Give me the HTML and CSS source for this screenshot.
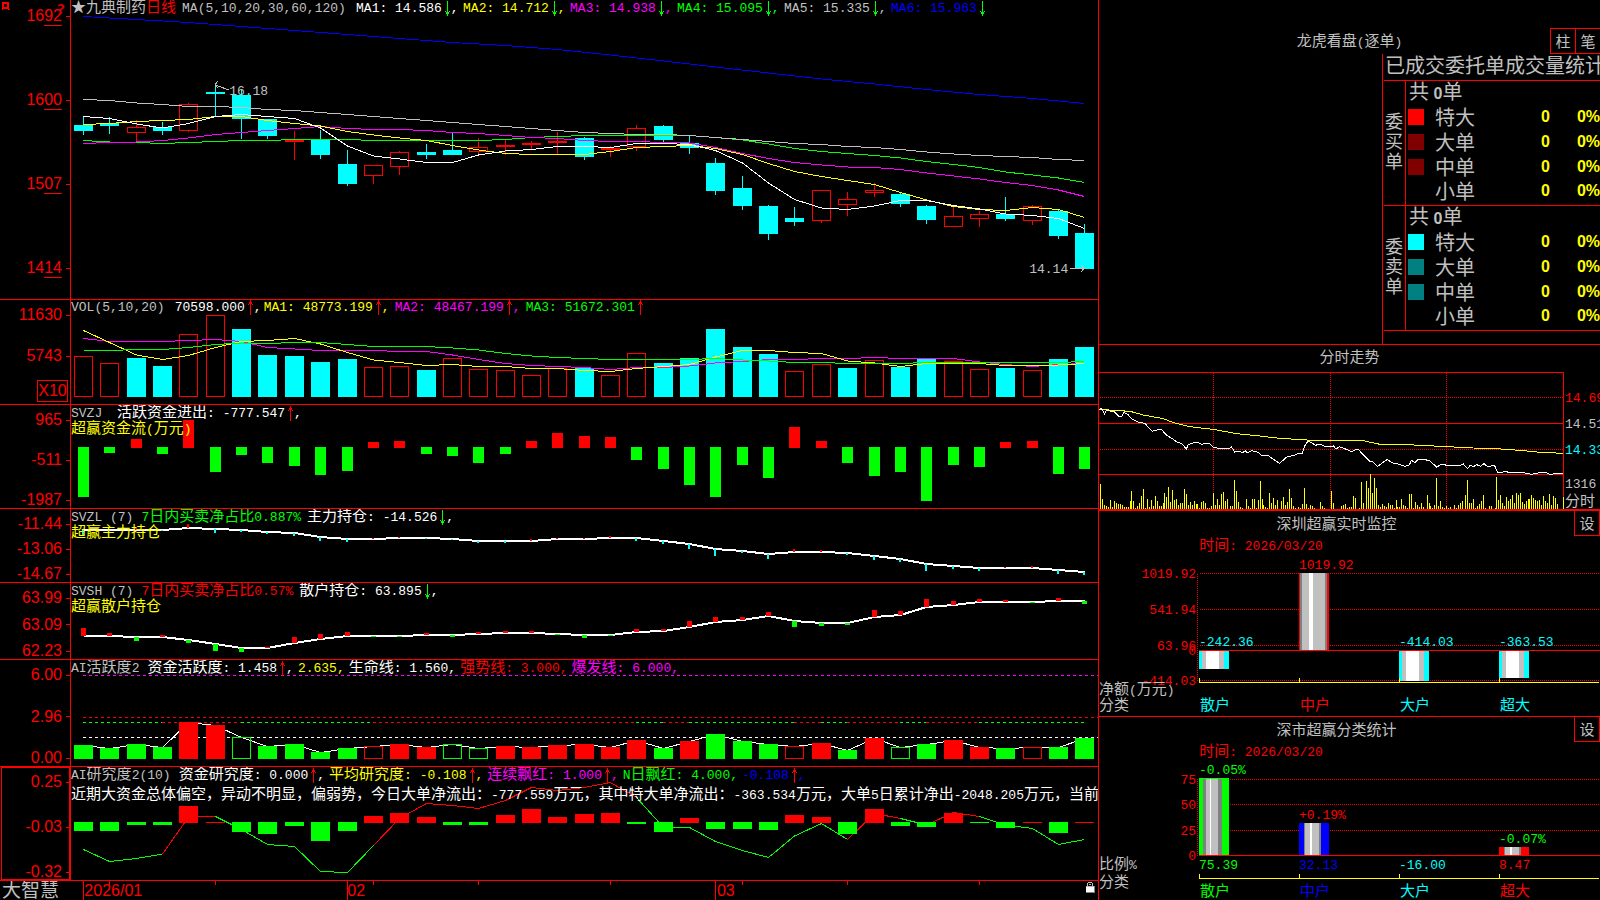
FILE: index.html
```
<!DOCTYPE html>
<html lang="zh-CN">
<head>
<meta charset="utf-8">
<title>九典制药 日线 - 大智慧</title>
<link rel="stylesheet" href="styles.css">
</head>
<body>
<svg class="defs" aria-hidden="true">
  <symbol id="down" viewBox="0 0 6 15"><path d="M2 0h1v15h-1zM1 11h3v2h-3zM0 10h1v1h-1zM4 10h1v1h-1z" fill="#0f0"/></symbol>
  <symbol id="up" viewBox="0 0 6 15"><path d="M2 0h1v15h-1zM1 2h3v2h-3zM0 4h1v1h-1zM4 4h1v1h-1z" fill="#f00"/></symbol>
</svg>
<div class="screen">
  <main class="charts">
    <section class="pane price">
      <ul class="axis">
        <li>16<u>92</u></li><li>16<u>00</u></li><li>15<u>07</u></li><li>14<u>14</u></li>
      </ul>
      <svg class="corner" viewBox="0 0 8 8"><path d="M0 0h7v7h-7zM2 2v3h3v-3zM6 7h2v1h-2zM0 7h1v1h-1z" fill="#f00" fill-rule="evenodd"/></svg>
      <span class="help">?</span>
      <div class="plot">
        <svg id="price" viewBox="71 0 1027 299" preserveAspectRatio="none"></svg>
        <div class="legend">
          <p class="line first"><span class="grey zh">★九典制药<span class="red">日线</span></span><span class="grey ma0">MA(5,10,20,30,60,120)</span><span class="ma white">MA1: 14.586<svg class="arr"><use href="#down"/></svg>,</span><span class="ma yellow">MA2: 14.712<svg class="arr"><use href="#down"/></svg>,</span><span class="ma magenta">MA3: 14.938<svg class="arr"><use href="#down"/></svg>,</span><span class="ma green">MA4: 15.095<svg class="arr"><use href="#down"/></svg>,</span><span class="ma grey">MA5: 15.335<svg class="arr"><use href="#down"/></svg>,</span><span class="ma blue">MA6: 15.963<svg class="arr"><use href="#down"/></svg></span></p>
        </div>
        <span class="note high">16.18</span>
        <span class="note low">14.14</span>
      </div>
    </section>
    <section class="pane vol">
      <ul class="axis"><li>11630</li><li>5743</li><li class="unit"><span>X10</span></li></ul>
      <div class="plot">
        <svg id="volume" viewBox="71 300 1027 104" preserveAspectRatio="none"></svg>
        <div class="legend">
          <p class="line"><span class="grey">VOL(5,10,20)</span><span class="white vnow">70598.000<svg class="arr"><use href="#up"/></svg>,</span><span class="vma yellow">MA1: 48773.199<svg class="arr"><use href="#up"/></svg>,</span><span class="vma magenta">MA2: 48467.199<svg class="arr"><use href="#up"/></svg>,</span><span class="vma green">MA3: 51672.301<svg class="arr"><use href="#up"/></svg></span></p>
        </div>
      </div>
    </section>
    <section class="pane">
      <ul class="axis"><li>965</li><li>-511</li><li>-1987</li></ul>
      <div class="plot">
        <svg id="flow" viewBox="71 405 1027 103" preserveAspectRatio="none"></svg>
        <div class="legend">
          <p class="line"><span class="grey">SVZJ </span><span class="white far"><span class="zh">活跃资金进出</span>: -777.547<svg class="arr"><use href="#up"/></svg>,</span></p>
          <p class="line sub yellow"><span><span class="zh">超赢资金流</span>(<span class="zh">万元</span>)</span></p>
        </div>
      </div>
    </section>
    <section class="pane">
      <ul class="axis"><li>-11.44</li><li>-13.06</li><li>-14.67</li></ul>
      <div class="plot">
        <svg id="main" viewBox="71 509 1027 73" preserveAspectRatio="none"></svg>
        <div class="legend">
          <p class="line"><span class="grey">SVZL (7)</span><span class="green pct">7<span class="zh">日内买卖净占比</span>0.887%</span><span class="white"><span class="zh">主力持仓</span>: -14.526<svg class="arr"><use href="#down"/></svg>,</span></p>
          <p class="line sub yellow"><span class="zh">超赢主力持仓</span></p>
        </div>
      </div>
    </section>
    <section class="pane">
      <ul class="axis"><li>63.99</li><li>63.09</li><li>62.23</li></ul>
      <div class="plot">
        <svg id="retail" viewBox="71 583 1027 76" preserveAspectRatio="none"></svg>
        <div class="legend">
          <p class="line"><span class="grey">SVSH (7)</span><span class="red pct">7<span class="zh">日内买卖净占比</span>0.57%</span><span class="white"><span class="zh">散户持仓</span>: 63.895<svg class="arr"><use href="#down"/></svg>,</span></p>
          <p class="line sub yellow"><span class="zh">超赢散户持仓</span></p>
        </div>
      </div>
    </section>
    <section class="pane">
      <ul class="axis"><li>6.00</li><li>2.96</li><li>0.00</li></ul>
      <div class="plot">
        <svg id="active" viewBox="71 660 1027 106" preserveAspectRatio="none"></svg>
        <div class="legend">
          <p class="line wide"><span class="grey name">AI<span class="zh">活跃度</span>2</span><span class="white"><span class="zh">资金活跃度</span>: 1.458<svg class="arr"><use href="#up"/></svg>,</span><span class="yellow">2.635,</span><span class="white"><span class="zh">生命线</span>: 1.560,</span><span class="red"><span class="zh">强势线</span>: 3.000,</span><span class="magenta"><span class="zh">爆发线</span>: 6.000,</span></p>
        </div>
      </div>
    </section>
    <section class="pane">
      <ul class="axis boxed"><li>0.25</li><li>-0.03</li><li>-0.32</li></ul>
      <div class="plot">
        <svg id="study" viewBox="71 767 1027 113" preserveAspectRatio="none"></svg>
        <div class="legend">
          <p class="line wide"><span class="grey name">AI<span class="zh">研究度</span>2(10)</span><span class="white"><span class="zh">资金研究度</span>: 0.000<svg class="arr"><use href="#up"/></svg>,</span><span class="yellow"><span class="zh">平均研究度</span>: -0.108<svg class="arr"><use href="#up"/></svg>,</span><span class="magenta"><span class="zh">连续飘红</span>: 1.000<svg class="arr"><use href="#up"/></svg>,</span><span class="green">N<span class="zh">日飘红</span>: 4.000,</span><span class="blue">-0.108<svg class="arr"><use href="#up"/></svg>,</span></p>
          <p class="line advice white"><span><span class="zh">近期大资金总体偏空，异动不明显，偏弱势，今日大单净流出：</span>-777.559<span class="zh">万元，其中特大单净流出：</span>-363.534<span class="zh">万元，大单</span>5<span class="zh">日累计净出</span>-2048.205<span class="zh">万元，当前</span></span></p>
        </div>
      </div>
    </section>
    <footer class="dates">
      <span class="brand">大智慧</span>
      <div class="plot">
        <svg id="dates" viewBox="71 881 1027 19" preserveAspectRatio="none"></svg>
        <span class="month m1">2026/01</span><span class="month m2">02</span><span class="month m3">03</span>
        <svg class="lock" viewBox="0 0 11 13"><path d="M3 1h4v1h-4zM2 2h1v3h-1zM7 2h1v3h-1zM4 3h2v1h-2z" fill="#c0c0c0"/><path d="M1 5h8v6h-8z" fill="#fff"/><path d="M9 5h1v7h-9v-1h8z" fill="#808080"/><path d="M1 5h8v1h-8z" fill="#c0c0c0"/></svg>
      </div>
    </footer>
  </main>

  <aside class="side">
    <section class="orders">
      <header class="head">
        <h2 class="grey"><span class="zh">龙虎看盘</span>(<span class="zh">逐单</span>)</h2>
        <div class="tools"><button type="button">柱</button><button type="button">笔</button></div>
      </header>
      <div class="book">
        <h3>已成交委托单成交量统计</h3>
        <table>
          <tbody>
            <tr><th rowspan="5" class="v">委<br>买<br>单</th><td colspan="4" class="sum">共 <b>0</b>单</td></tr>
            <tr><td class="sw"><i class="s1"></i></td><td class="nm">特大</td><td class="n">0</td><td class="p">0%</td></tr>
            <tr><td class="sw"><i class="s2"></i></td><td class="nm">大单</td><td class="n">0</td><td class="p">0%</td></tr>
            <tr><td class="sw"><i class="s2"></i></td><td class="nm">中单</td><td class="n">0</td><td class="p">0%</td></tr>
            <tr><td class="sw"></td><td class="nm">小单</td><td class="n">0</td><td class="p">0%</td></tr>
          </tbody>
          <tbody>
            <tr><th rowspan="5" class="v">委<br>卖<br>单</th><td colspan="4" class="sum">共 <b>0</b>单</td></tr>
            <tr><td class="sw"><i class="s3"></i></td><td class="nm">特大</td><td class="n">0</td><td class="p">0%</td></tr>
            <tr><td class="sw"><i class="s4"></i></td><td class="nm">大单</td><td class="n">0</td><td class="p">0%</td></tr>
            <tr><td class="sw"><i class="s4"></i></td><td class="nm">中单</td><td class="n">0</td><td class="p">0%</td></tr>
            <tr><td class="sw"></td><td class="nm">小单</td><td class="n">0</td><td class="p">0%</td></tr>
          </tbody>
        </table>
      </div>
    </section>
    <section class="minute">
      <h2 class="grey zh">分时走势</h2>
      <svg id="minute" viewBox="1099 372 501 137"></svg>
    </section>
    <section class="monitor">
      <header class="head"><h2 class="grey zh">深圳超赢实时监控</h2><div class="tools"><button type="button">设</button></div></header>
      <p class="when"><span class="zh">时间</span>: 2026/03/20</p>
      <svg id="net" viewBox="1099 553 501 163"></svg>
    </section>
    <section class="stats">
      <header class="head"><h2 class="grey zh">深市超赢分类统计</h2><div class="tools"><button type="button">设</button></div></header>
      <p class="when"><span class="zh">时间</span>: 2026/03/20</p>
      <svg id="share" viewBox="1099 759 501 141"></svg>
    </section>
  </aside>
</div>
<script src="charts.js"></script>
</body>
</html>
```
FILE: styles.css
```
* { box-sizing: border-box; }
html, body { height: 100%; }
body { margin: 0; background: #000; color: #c0c0c0; font: 13px/16px "Liberation Mono", "Noto Sans CJK SC", monospace; overflow: hidden; }
ul, p, h2, h3 { margin: 0; padding: 0; list-style: none; font-weight: normal; font-size: inherit; }
svg { display: block; shape-rendering: crispEdges; }
.defs { position: absolute; width: 0; height: 0; }
.zh { font-family: "Noto Sans CJK SC", sans-serif; font-size: 15px; }
.red { color: #f00; }
.green { color: #0f0; }
.blue { color: #00f; }
.yellow { color: #ff0; }
.magenta { color: #f0f; }
.white { color: #fff; }
.grey { color: #c0c0c0; }

.screen { display: grid; grid-template-columns: minmax(0, 1098fr) minmax(0, 502fr); height: 100vh; }

.charts { display: grid; grid-template-rows: 300fr 105fr 104fr 74fr 77fr 107fr 114fr 19fr; min-height: 0; }
.pane { position: relative; display: grid; grid-template-columns: 71px minmax(0, 1fr); border-bottom: 1px solid #f00; min-height: 0; }
.axis { display: flex; flex-direction: column; justify-content: space-between; padding-top: 7px; border-right: 1px solid #f00; color: #f00; font: 16px/16px "Liberation Sans", sans-serif; }
.axis li { display: flex; justify-content: flex-end; align-items: center; height: 16px; }
.axis li::after { content: ""; width: 4px; height: 1px; margin-left: 4px; background: #f00; }
.axis u { text-decoration: none; border-bottom: 1px solid #f00; height: 18px; }
.price .axis { padding: 8px 0 23px; }
.price .axis li { align-items: flex-start; }
.price .axis li::after { margin-top: 8px; }
.vol .axis { justify-content: flex-start; gap: 25px; }
.vol .unit { height: 22px; margin-top: -9px; }
.vol .unit::after { display: none; }
.unit span { border: 1px solid #f00; line-height: 20px; width: 31px; margin-right: 2px; text-align: center; }
.boxed { position: relative; }
.boxed::before { content: ""; position: absolute; inset: 0 0 0 1px; border: 1px solid #f00; }
.corner { position: absolute; left: 2px; top: 2px; width: 8px; height: 8px; }
.help { position: absolute; left: 57px; top: 2px; color: #d00000; font: bold 14px/14px "DejaVu Sans", sans-serif; }

.plot { position: relative; min-width: 0; min-height: 0; overflow: hidden; }
.plot > svg:first-child { position: absolute; width: 100%; height: 100%; }
.plot polyline, .plot line, .plot rect { vector-effect: non-scaling-stroke; }
.legend { position: relative; margin-top: -2px; }
.vol .legend { margin-top: 0; }
.line { display: flex; align-items: baseline; gap: 6px; height: 16px; line-height: 16px; white-space: pre; }
.line > span { flex: none; line-height: 16px; }
.line .zh { line-height: 1; }
.line.first { gap: 0; }
.line.sub { height: 15px; line-height: 15px; }
.line.wide { gap: 4px; }
.line .name { margin-right: 4px; }
.line.advice { margin-top: 4px; }
.ma0 { width: 174px; margin-left: 6px; }
.ma { width: 107px; }
.vnow { margin-left: 4px; width: 83px; }
.vma { width: 125px; }
.far { margin-left: 1px; }
.pct { margin-left: 2px; }
.arr { display: inline-block; width: 6px; height: 15px; margin-left: 3px; vertical-align: -4px; }
.note { position: absolute; color: #c0c0c0; }
.high { left: 15.4%; top: 28%; }
.low { right: 2.9%; bottom: 7%; }

.dates { display: grid; grid-template-columns: 71px minmax(0, 1fr); min-height: 0; }
.brand { font: 19px/16px "Noto Sans CJK SC", sans-serif; padding-left: 2px; white-space: nowrap; }
.month { position: absolute; top: 1px; color: #f00; font: 16px/18px "Liberation Sans", sans-serif; }
.m1 { left: 1.3%; }
.m2 { left: 26.9%; }
.m3 { left: 62.9%; }
.lock { position: absolute; right: 2px; top: 0; width: 11px; height: 13px; }

.side { display: grid; grid-template-rows: 345fr 166fr 206fr 183fr; border-left: 1px solid #f00; min-width: 0; min-height: 0; }
.side section { display: flex; flex-direction: column; min-height: 0; min-width: 0; border-bottom: 1px solid #f00; overflow: hidden; }
.side .minute { border-bottom-width: 2px; }
.side .stats { border-bottom: 0; }
.head { display: flex; height: 25px; flex: none; }
.head h2 { flex: 1; text-align: center; line-height: 23px; }
.head button { width: 26px; height: 25px; margin: 0; padding: 0; border: 1px solid #f00; border-top: 0; background: #000; color: #c0c0c0; font: 15px/20px "Noto Sans CJK SC", sans-serif; }
.tools { display: flex; }
.orders .head { position: relative; height: 26px; margin-top: 28px; }
.orders h2 { line-height: 24px; }
.orders .tools { position: absolute; right: 0; top: 0; }
.orders button { border-top: 1px solid #f00; border-right: 0; width: 25px; height: 26px; }

.book { flex: 1; width: 218px; margin-left: auto; border-left: 1px solid #f00; overflow: hidden; }
.book h3 { margin-left: 1px; padding-left: 1px; height: 27px; border-bottom: 1px solid #f00; font: 20px/22px "Noto Sans CJK SC", sans-serif; white-space: nowrap; }
table { width: 216px; margin-left: 1px; border-collapse: separate; border-spacing: 0; }
tr:last-child td, .v { border-bottom: 1px solid #f00; }
td, th { padding: 0 0 4px; height: 25px; font: 20px/20px "Noto Sans CJK SC", sans-serif; }
.v { width: 22px; border-right: 1px solid #f00; padding: 0 0 6px 1px; font-size: 18px; text-align: left; }
.sum { padding-left: 3px; white-space: pre; }
.sum b { font: bold 16px/1 "Liberation Sans", sans-serif; }
.n, .p { font: bold 16px/20px "Liberation Sans", sans-serif; }
.sw { width: 29px; padding-left: 2px; }
.sw i { display: block; width: 16px; height: 16px; }
.s1 { background: #f00; }
.s2 { background: #800000; }
.s3 { background: #0ff; }
.s4 { background: #008080; }
.n, .p { color: #ff0; text-align: right; }
.p { width: 50px; }

.minute h2 { text-align: center; height: 27px; flex: none; line-height: 22px; }
.minute svg, .monitor svg, .stats svg { flex: 1; min-height: 0; width: 100%; }
.when { height: 17px; flex: none; margin-left: 20%; color: #f00; white-space: pre; line-height: 13px; }
.when .zh { line-height: 1; }
svg text { font: 13px "Liberation Mono", monospace; white-space: pre; }
svg text.zh { font: 15px "Noto Sans CJK SC", sans-serif; }
svg .num { font: 13px "Liberation Mono", monospace; }
```
FILE: charts.js
```
const NS = 'http://www.w3.org/2000/svg';
const RED = '#f00', CYAN = '#0ff', GREEN = '#0f0', YELLOW = '#ff0', GREY = '#c0c0c0', WHITE = '#fff', DIM = '#808080';
const cx = i => Math.floor(83.5 + 26.35 * i);
const byId = id => document.getElementById(id);

function add(svg, tag, attrs, text) {
  const el = document.createElementNS(NS, tag);
  for (const k in attrs) el.setAttribute(k, attrs[k]);
  if (text !== undefined) el.textContent = text;
  svg.appendChild(el);
  return el;
}
const box = (svg, x, y, w, h, fill) => add(svg, 'rect', { x, y, width: w, height: h, fill });
const frame = (svg, x, y, w, h, stroke) => add(svg, 'rect', { x: x + .5, y: y + .5, width: w - 1, height: h - 1, fill: 'none', stroke });
const poly = (svg, pts, stroke, width = 1) => add(svg, 'polyline', { points: pts.map(p => p.join(',')).join(' '), fill: 'none', stroke, 'stroke-width': width });
const series = (svg, ys, stroke, width) => poly(svg, ys.map((y, i) => [cx(i) + .5, y]), stroke, width);
const rule = (svg, x1, y1, x2, y2, stroke, dash) => add(svg, 'line', dash ? { x1, y1, x2, y2, stroke, 'stroke-dasharray': dash } : { x1, y1, x2, y2, stroke });

/* Daily candles: kind (c = down, h = hollow up, r = thin up), high, top, bottom, low */
const candles = `c117,125,131,135 c117,123,126,134 h120,127,133,141 c122,127,131,135 h103,104,131,132 c85,92,94,116
c89,95,119,139 c119,119,136,139 r131,140,142,160 c130,139,155,159 c150,164,184,186 h165,165,176,184 h151,152,167,175
c144,152,155,159 c133,150,155,155 h138,147,152,156 r140,145,147,155 r141,143,145,149 r132,141,143,154 c137,138,157,160
r146,148,150,157 h125,128,147,151 c125,126,140,142 c136,143,148,154 c158,163,191,195 c176,188,206,210 c205,206,234,240
c207,218,222,226 h190,190,221,223 h192,199,205,216 h183,190,193,197 c192,194,204,207 c205,206,220,224 h207,216,227,227
h211,214,219,227 c197,214,219,221 h205,206,221,225 c210,211,236,239 c224,233,269,269`.split(/\s+/);
const price = byId('price');
candles.forEach((c, i) => {
  const [hi, top, bot, lo] = c.slice(1).split(',').map(Number);
  const x = cx(i), color = c[0] === 'c' ? CYAN : RED;
  if (c[0] === 'h') {
    box(price, x, hi, 1, top - hi, color);
    box(price, x, bot, 1, lo - bot, color);
    frame(price, x - 9, top, 19, bot - top, color);
  } else {
    box(price, x, hi, 1, lo - hi, color);
    box(price, x - 9, top, 19, bot - top, color);
  }
});
poly(price, [16.5, 19.5, 22.5, 26.5, 30.5, 34.5, 38.5, 42.5, 45.5, 49.5, 55, 61, 67, 73, 79, 84, 89.5, 94.5, 98.5, 103.5].map((y, i) => [cx(i * 2) + .5, y]), '#00f');
series(price, [140.5,142,142.5,143.5,142.5,141.5,140.5,140.5,139.5,139.5,139.5,140.5,140.5,140.5,140.5,140.5,139.5,137.5,136.5,135.5,135.5,135.5,135.5,135.5,137.5,140,144,148.5,151.5,153.5,155.5,158,161.5,164.5,167.5,172,175,178,182.5], GREEN);
series(price, [143.5,142.5,142,140.5,138,134.5,132.5,130.5,128.5,126.5,128.5,129.5,129.5,130.5,132.5,133.5,135.5,137.5,138.5,140.5,141.5,141.5,142.5,143,147.5,153.5,158.5,162.5,165,167,167.5,169.5,173,176,179,182.5,185.5,190,196.5], '#f0f');
series(price, [99.5,100.5,103,104.5,106.5,106.5,107.5,109.5,110.5,112.5,114.5,116.5,118.5,120.5,122.5,124.5,126.5,128.5,130.5,132.5,133.5,134.5,134.5,135.5,137.5,139.5,141.5,143.5,144.5,146.5,147.5,149.5,152,154,155.5,156.5,157.5,159.5,160.5], GREY);
series(price, [124.5,123.5,121.5,120.5,119.5,116.5,116.5,120.5,123.5,126,131.5,135,138,140.5,145.5,150,153.5,154.5,154.5,154.5,151.5,147.5,146.5,145.5,148.5,154.5,163.5,171.5,176.5,180.5,184.5,192.5,200,206.5,209.5,210.5,207.5,209.5,217.5], YELLOW);
series(price, [116.5,118.5,124,128,123.5,116.5,114.5,116.5,118.5,128,146,156,159,162.5,162.5,155,151,149.5,146.5,146.5,147.5,143.5,143.5,144.5,150.5,163,183,199.5,208,209.5,206,200.5,200.5,205.5,209,214,215.5,218.5,228.5], WHITE);
add(price, 'path', { d: 'M229 90L215 85M218 81L215 85L218 88M1070 268.5H1084M1081 265L1084 268.5L1081 272', fill: 'none', stroke: GREY });

/* Volume */
const vol = byId('volume');
'r356 r363 c358 c366 r334 r315 c329 c355 c356 c362 c359 r367 r366 c370 r358 r369 r370 r375 r368 c368 r375 r353 c363 c358 c329 c347 c354 r371 r364 c368 r360 c367 c359 r361 r369 c368 r370 c359 c347'.split(' ').forEach((v, i) => {
  const y = +v.slice(1);
  (v[0] === 'c' ? box : frame)(vol, cx(i) - 9, y, 19, 397 - y, v[0] === 'c' ? CYAN : RED);
});
series(vol, [338.5,341.5,341.5,341.5,340.5,339.5,341.5,347.5,349,350.5,350.5,350.5,351.5,351.5,355,359.5,363.5,365.5,366.5,367.5,369.5,367.5,367.5,366,363,361.5,359.5,359.5,358.5,358.5,357.5,358.5,358.5,358.5,362,364.5,366.5,364.5,363.5], '#f0f');
series(vol, [330.5,342.5,355,359.5,355.5,347.5,341.5,340.5,338.5,344,352.5,360,362.5,365.5,364.5,366.5,366.5,368.5,368.5,370.5,371.5,368.5,366.5,364.5,357,350.5,350.5,352.5,353.5,361,363,366.5,363.5,363.5,363.5,365.5,365.5,365,363.5], YELLOW);
series(vol, [350.5,350.5,349.5,349.5,347.5,344.5,343,343.5,342.5,342.5,344.5,346.5,346.5,346.5,348,350,353.5,356,357.5,358.5,359.5,359.5,359.5,359.5,358.5,360,361,362.5,362.5,363.5,363.5,363.5,362.5,362.5,362.5,362.5,362.5,362.5,361.5], GREEN);

/* Active capital flow: green below the base line, red above */
const flow = byId('flow');
[497,453,439,454,420,472,455,463,466,475,471,442,441,454,456,463,454,441,433,436,437,460,469,485,497,465,478,427,441,463,476,472,501,465,467,442,441,474,469].forEach((y, i) =>
  y > 447 ? box(flow, cx(i) - 5, 447, 11, y - 447, GREEN) : box(flow, cx(i) - 5, y, 11, 448 - y, RED));

/* Position lines with change marks */
function positions(id, ys, marks, w, downColor) {
  const svg = byId(id);
  series(svg, ys, WHITE, 2);
  marks.forEach((m, i) => box(svg, cx(i) - Math.floor(w / 2), Math.round(m > 0 ? ys[i] : ys[i] + m), w, Math.abs(m), m > 0 ? downColor : RED));
}
positions('main', [530,530,530,530,528,529,530,532,533,537,539,539,538,538,539,541,541,541,539,539,538,538,541,544,549,551,554,552,552,553,556,559,564,566,568,568,568,570,572],
  [6,1,-3,1,-4,4,2,2,3,4,3,-1,-1,1,1,2,2,-2,-1,-1,-2,3,3,5,7,2,5,-3,-2,2,4,3,7,3,3,-1,-2,4,3], 2, CYAN);
positions('retail', [636,636,637,637,640,644,648,648,643,639,636,636,636,635,635,634,633,633,634,635,635,632,631,627,622,620,616,621,623,623,617,615,607,605,602,602,602,601,601],
  [-8,-3,4,-2,3,7,4,-1,-6,-5,-4,1,1,-2,2,-2,-2,-2,1,3,1,-3,-2,-6,-5,-3,-4,6,3,2,-7,-4,-8,-4,-3,-2,1,-3,3], 5, GREEN);

/* Activity: capital letter = filled */
const active = byId('active');
const bars = 'G745 G748 G744 G747 R722 R725 g737 G746 G744 G752 G748 r746 R744 R747 g744 g748 R746 R747 R745 R744 R747 R740 G748 R741 G734 G741 G744 r746 R743 G750 R738 g747 G744 R740 R747 G748 r747 G747 G738'.split(' ');
rule(active, 83, 675.5, 1098, 675.5, '#f0f', '3 3');
rule(active, 83, 717.5, 1098, 717.5, RED, '3 3');
rule(active, 83, 737.5, 1098, 737.5, WHITE, '3 3');
[[0, 3], [3, 6], [6, 11], [11, 21], [21, 22], [22, 23], [23, 27], [27, 28], [28, 29], [29, 31], [31, 32], [32, 34], [34, 38]].forEach(([a, b], k) =>
  rule(active, cx(a), 722.5, cx(b), 722.5, k % 2 ? RED : GREEN, '3 3'));
series(active, bars.map(b => +b.slice(1) + .5), WHITE);
bars.forEach((b, i) => {
  const y = +b.slice(1), color = b[0].toLowerCase() === 'g' ? GREEN : RED;
  (b[0] < 'a' ? box : frame)(active, cx(i) - 9, y, 19, 759 - y, color);
});

/* Research index */
const study = byId('study');
const trend = [849.5,861.5,858.5,854,817,816.5,829.5,844.5,846.5,871.5,872.5,845.5,818.5,803.5,805.5,808.5,800.5,787.5,790.5,787.5,782.5,797.5,827.5,827.5,841.5,850.5,857.5,836,823.5,839.5,813.5,818.5,825,812.5,816.5,825,828.5,844.5,839.5];
[[0, 3], [3, 5], [5, 11], [11, 21], [21, 29], [29, 31], [31, 32], [32, 34], [34, 38]].forEach(([a, b], k) =>
  poly(study, trend.slice(a, b + 1).map((y, i) => [cx(a + i) + .5, y]), k % 2 ? RED : GREEN));
'g831 g831 g825 g825 r806 r822 g832 g834 g826 g841 g831 r816 r813 r817 g825 g825 r815 r809 r817 r814 r813 g824 g832 r818 g829 g829 g830 r815 r817 g834 r809 g826 g827 r813 g823 g828 r822 g833 r822'.split(' ').forEach((b, i) => {
  const y = +b.slice(1);
  b[0] === 'g' ? box(study, cx(i) - 9, 822, 19, y - 822, GREEN) : box(study, cx(i) - 9, y, 19, 823 - y, RED);
});

const dates = byId('dates');
[0, 10, 24].forEach(i => box(dates, cx(i), 881, 1, 19, RED));
[1, 5, 11, 15, 20, 25, 29, 34].forEach(i => box(dates, cx(i), 881, 1, 4, RED));

/* Intraday chart */
const minute = byId('minute');
const thirds = s => s.trim().split(/\s+/).map(p => p.split(',')).map(([x, y]) => [1090 + x / 3, 340 + y / 3]);
[1213, 1330, 1446].forEach(x => rule(minute, x + .5, 373, x + .5, 509, RED, '1 1'));
[397, 449].forEach(y => rule(minute, 1100, y + .5, 1563, y + .5, RED, '1 1'));
[372, 423, 474].forEach(y => box(minute, 1099, y, 464, 1, RED));
box(minute, 1563, 372, 1, 137, RED);
/* Per-minute volume as x:height, x in thirds of a unit from the origin given */
const volumes = [
  [1096, `13:25 19:10 25:4 31:3 37:2 43:9 49:2 55:8 61:6 67:5 73:5 79:4 85:2 91:2 97:2 103:8 106:18 112:8 118:1 124:3 130:6 136:13 142:20 148:1 154:10
160:2 166:9 172:3 178:13 184:8 190:3 196:3 202:6 205:16 211:12 217:22 223:7 229:19 235:9 241:10 247:4 253:6 259:6 265:20 271:15 277:4 283:7 289:4 295:8
301:5 304:5 310:1 316:7 322:8 328:6 334:1 340:1 346:3 352:16 358:4 364:10 370:4 376:15 382:17 388:8 394:10 403:3 409:3 415:29 421:18 427:7 433:2 439:1
451:10 457:3 463:1 469:10 475:10 481:1 487:9 493:28 499:10 502:4 508:2 514:1 520:16 526:6 532:11 538:4 544:9 556:8 562:12 568:4 574:7 580:20 586:11
592:3 598:1 607:2 613:1 619:5 625:21 631:5 637:1 643:4 649:3 655:1 673:7 679:3 685:1`],
  [1330, `4:18 10:6 34:3 40:4 46:5 52:1 58:2 64:2 70:13 76:11 88:1 94:27 100:6 109:28 115:21 121:35 127:16 133:31 139:21 145:4 151:2 157:5 163:3 169:2
175:6 181:4 187:4 193:1 199:9 202:2 208:2 214:10 220:4 226:3 232:1 238:15 244:15 250:1 256:7 262:4 268:2 274:6 280:2 292:14 298:6 301:3 307:1 313:4
319:31 325:3 331:8 337:2 343:1 349:3 355:1 361:2 373:4 379:1 385:4 391:6 397:8 406:14 412:29 418:6 424:6 430:10 436:1 442:3 448:5 454:8 460:14 466:1
478:3 484:3 496:1 499:32 505:9 511:14 517:6 523:3 529:12 535:8 541:10 547:14 553:6 559:16 565:14 571:16 577:7 583:5 589:8 595:10 598:10 604:14 610:11
616:9 622:8 628:9 634:4 640:13 646:8 652:6 658:15 664:4 670:13 676:11 682:5 700:12`]
];
volumes.forEach(([origin, list]) => list.split(/\s+/).forEach(item => {
  const [x, h] = item.split(':').map(Number);
  box(minute, origin + Math.floor(x / 3), 509 - h, 1, h, YELLOW);
}));
poly(minute, thirds('27,208 70,211 120,214 160,225 220,236 250,248 300,260 340,265 370,268 440,281 500,287 570,295 650,300 810,300 870,313 950,314 1070,320 1150,324 1220,326 1290,331 1350,337 1420,340'), YELLOW);
poly(minute, thirds(`27,208 34,205 44,222 48,212 72,214 85,228 96,228 102,218 114,224 125,236 145,246 165,250 175,262 187,274 200,270 214,268 230,286
250,298 260,306 275,310 289,327 295,314 312,308 325,308 335,313 345,310 360,312 372,323 390,325 420,325 424,320 434,336 445,333 458,338 466,332
472,338 485,332 505,337 515,346 535,347 550,358 568,370 578,362 590,351 612,346 625,340 637,341 644,318 654,303 665,308 676,316 690,312 705,319
722,321 730,317 738,327 748,320 762,325 785,335 795,330 806,328 815,340 840,364 848,364 862,380 875,370 892,358 905,368 925,372 945,379 958,375
964,361 975,368 985,358 1005,359 1018,362 1030,372 1040,382 1050,375 1058,372 1075,378 1110,377 1120,372 1133,386 1140,376 1150,380 1160,374
1172,379 1182,371 1192,379 1214,377 1222,396 1235,398 1245,394 1260,398 1280,399 1300,398 1325,403 1350,398 1368,398 1380,404 1395,401 1420,401`), WHITE);
const label = (svg, x, y, text, fill, end, zh) => add(svg, 'text', Object.assign({ x, y: y + (zh ? 5 : 4), fill }, end ? { 'text-anchor': 'end' } : {}, zh ? { class: 'zh' } : {}), text);
label(minute, 1565, 398, '14.69', RED);
label(minute, 1565, 424, '14.51', GREY);
label(minute, 1565, 450, '14.33', CYAN);
label(minute, 1565, 484, '1316', GREY);
label(minute, 1565, 501, '分时', GREY, false, true);

/* Category bars */
function column(svg, x, top, bottom, stops) {
  stops.forEach(([from, to, color]) => box(svg, x + from, top, to - from, bottom - top, color));
}
function categories(svg, axisY, textY, colors) {
  box(svg, 1199, axisY, 400, 1, YELLOW);
  ['散户', '中户', '大户', '超大'].forEach((name, i) => {
    box(svg, 1199 + 100 * i, axisY - 4, 1, 4, YELLOW);
    label(svg, 1200 + 100 * i, textY, name, colors[i], false, true);
  });
}
const net = byId('net');
[573, 609, 645, 680].forEach(y => rule(net, 1200, y + .5, 1600, y + .5, RED, '1 1'));
rule(net, 1197.5, 574, 1197.5, 681, RED, '1 1');
box(net, 1199, 650, 401, 1, RED);
[[574, '1019.92'], [610, '541.94'], [646, '63.96'], [651, '0'], [681, '-414.03']].forEach(([y, t]) => label(net, 1196, y, t, RED, true));
const cyanBar = [[0, 3, CYAN], [3, 7, GREY], [7, 20, WHITE], [20, 25, GREY], [25, 30, CYAN]];
column(net, 1199, 651, 669, cyanBar);
column(net, 1299, 573, 650, [[0, 1, RED], [1, 3, DIM], [3, 10, GREY], [10, 14, WHITE], [14, 26, GREY], [26, 28, DIM], [28, 30, RED]]);
column(net, 1399, 651, 681, cyanBar);
column(net, 1499, 651, 678, cyanBar);
label(net, 1199, 642, '-242.36', CYAN);
label(net, 1299, 565, '1019.92', RED);
label(net, 1399, 642, '-414.03', CYAN);
label(net, 1499, 642, '-363.53', CYAN);
categories(net, 682, 705, [CYAN, RED, CYAN, CYAN]);
const unit = label(net, 1099, 689, '净额', GREY, false, true);
add(unit, 'tspan', { class: 'num' }, '(');
add(unit, 'tspan', {}, '万元');
add(unit, 'tspan', { class: 'num' }, ')');
label(net, 1099, 705, '分类', GREY, false, true);

const share = byId('share');
[779, 804, 830].forEach(y => rule(share, 1200, y + .5, 1600, y + .5, RED, '1 1'));
rule(share, 1197.5, 779, 1197.5, 856, RED, '1 1');
box(share, 1199, 855, 401, 1, RED);
[[780, '75'], [805, '50'], [831, '25'], [856, '0']].forEach(([y, t]) => label(share, 1196, y, t, RED, true));
column(share, 1199, 778, 855, [[0, 4, GREEN], [4, 7, DIM], [7, 11, GREY], [11, 12, WHITE], [12, 19, GREY], [19, 23, DIM], [23, 30, GREEN]]);
box(share, 1199, 778, 30, 1, GREEN);
const pipe = c => [[0, 5, c], [5, 6, DIM], [6, 11, GREY], [11, 13, WHITE], [13, 20, GREY], [20, 22, DIM], [22, 30, c]];
column(share, 1299, 823, 855, pipe('#00f'));
column(share, 1499, 847, 855, pipe(RED));
label(share, 1199, 770, '-0.05%', GREEN);
label(share, 1299, 815, '+0.19%', RED);
label(share, 1499, 839, '-0.07%', GREEN);
['75.39', '32.13', '-16.00', '8.47'].forEach((t, i) => label(share, 1199 + 100 * i, 865, t, [GREEN, '#00f', CYAN, RED][i]));
categories(share, 878, 891, [GREEN, '#00f', CYAN, RED]);
add(label(share, 1099, 864, '比例', GREY, false, true), 'tspan', { class: 'num' }, '%');
label(share, 1099, 882, '分类', GREY, false, true);
```
